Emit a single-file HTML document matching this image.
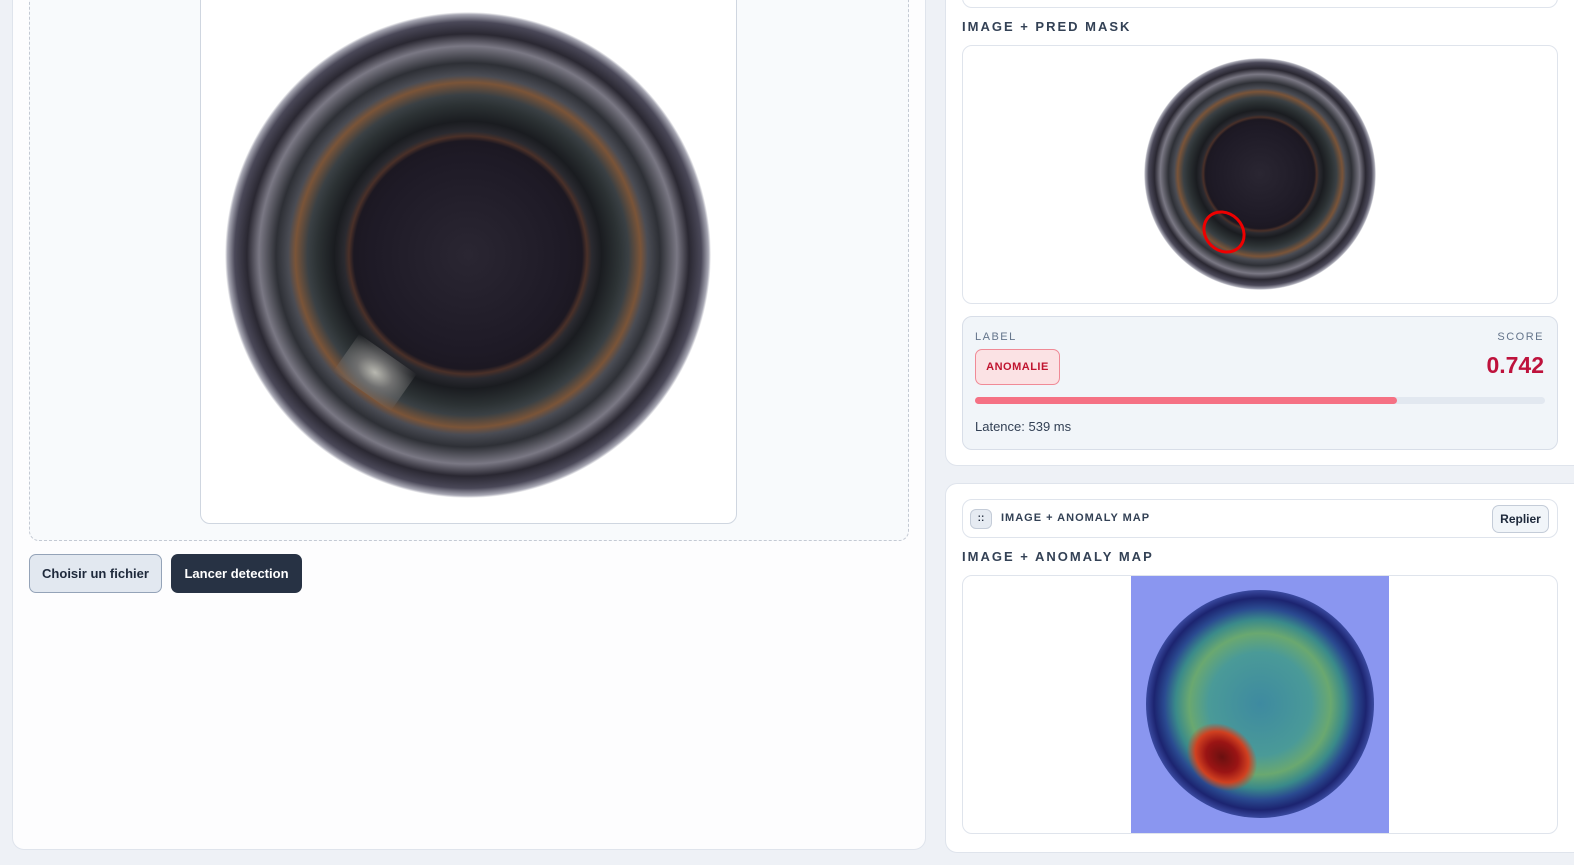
<!DOCTYPE html>
<html style="overflow:hidden;width:1574px;height:865px"><head><style>
*{box-sizing:border-box;margin:0;padding:0}
body{width:1574px;height:865px;background:#eef1f6;font-family:"Liberation Sans",sans-serif;position:relative;overflow:hidden;color:#1e293b}
.a{position:absolute}
.card{background:#fff;border:1px solid #dfe4ec;border-radius:12px}
.h{font-weight:bold;letter-spacing:2px;font-size:13px;color:#334155}
.btn{border-radius:7px;font-weight:bold;font-size:13px;display:flex;align-items:center;justify-content:center}
.bot{border-radius:50%;background:radial-gradient(circle closest-side,#2a2632 0,#1e1a26 40%,#1c1822 47%,#4a3028 49%,#2a2a30 51%,#1a1c20 55%,#2c3234 62%,#3a4044 66%,#7a5438 71%,#4a4c54 74%,#2e3036 79%,#7a7884 86%,#2a2832 91%,#4a4858 96%,#a8a8b4 99%,rgba(255,255,255,0) 100%)}
</style></head><body>
<div class="a card" style="left:12px;top:-20px;width:914px;height:870px;background:#fdfdfe"></div>
<div class="a" style="left:29px;top:-10px;width:880px;height:551px;border:1px dashed #c4cad4;border-radius:10px;background:#f8fafc"></div>
<div class="a" style="left:200px;top:-10px;width:537px;height:534px;background:#fff;border:1px solid #cfd6e0;border-radius:10px"></div>
<div class="a bot" style="left:225px;top:12px;width:486px;height:486px"></div>
<div class="a" style="left:340px;top:350px;width:70px;height:45px;background:radial-gradient(ellipse,#b8b8b0 0,#707070 40%,rgba(60,60,70,0) 100%);transform:rotate(35deg)"></div>
<div class="a btn" style="left:29px;top:554px;width:133px;height:39px;background:#e2e8f0;border:1px solid #94a3b8;color:#1e293b">Choisir un fichier</div>
<div class="a btn" style="left:171px;top:554px;width:131px;height:39px;background:#273244;color:#fff">Lancer detection</div>

<div class="a card" style="left:945px;top:-20px;width:629px;height:486px;border-right:none;border-radius:12px 0 0 12px"></div>
<div class="a" style="left:962px;top:-20px;width:596px;height:28px;border:1px solid #dfe4ec;border-radius:10px"></div>
<div class="a h" style="left:962px;top:19px">IMAGE + PRED MASK</div>
<div class="a" style="left:962px;top:45px;width:596px;height:259px;border:1px solid #dfe4ec;border-radius:10px;background:#fff"></div>
<div class="a bot" style="left:1144px;top:58px;width:232px;height:232px"></div>
<div class="a" style="left:1201px;top:212px;width:46px;height:40px;border:3px solid #e00;border-radius:50%;transform:rotate(45deg)"></div>
<div class="a" style="left:962px;top:316px;width:596px;height:134px;border:1px solid #d8dee8;border-radius:10px;background:#f1f5f9"></div>
<div class="a" style="left:975px;top:331px;font-size:11px;letter-spacing:1.5px;color:#64748b">LABEL</div>
<div class="a" style="left:1490px;top:331px;font-size:11px;letter-spacing:1.5px;color:#64748b;width:54px;text-align:right">SCORE</div>
<div class="a btn" style="left:975px;top:349px;width:85px;height:36px;background:#fbe2e4;border:1px solid #f08a96;color:#c0142f;font-size:11px;letter-spacing:.5px">ANOMALIE</div>
<div class="a" style="left:1440px;top:352px;width:104px;text-align:right;font-size:23px;font-weight:bold;color:#be123c">0.742</div>
<div class="a" style="left:975px;top:397px;width:570px;height:7px;border-radius:4px;background:#e2e8f0"></div>
<div class="a" style="left:975px;top:397px;width:422px;height:7px;border-radius:4px;background:#f57184"></div>
<div class="a" style="left:975px;top:419px;font-size:13px;color:#334155">Latence: 539 ms</div>

<div class="a card" style="left:945px;top:483px;width:629px;height:370px;border-right:none;border-radius:12px 0 0 12px"></div>
<div class="a" style="left:962px;top:499px;width:596px;height:39px;border:1px solid #dfe4ec;border-radius:10px"></div>
<div class="a" style="left:970px;top:509px;width:22px;height:20px;border:1px solid #c4ccd8;border-radius:6px;background:#e6ebf2;font-size:10px;text-align:center;line-height:18px;font-weight:bold">::</div>
<div class="a" style="left:1001px;top:512px;font-size:11px;font-weight:bold;letter-spacing:1px;color:#334155">IMAGE + ANOMALY MAP</div>
<div class="a btn" style="left:1492px;top:505px;width:57px;height:28px;border:1px solid #c4ccd8;background:#f1f5f9;font-size:12px;color:#1e293b">Replier</div>
<div class="a h" style="left:962px;top:549px">IMAGE + ANOMALY MAP</div>
<div class="a" style="left:962px;top:575px;width:596px;height:259px;border:1px solid #dfe4ec;border-radius:10px;background:#fff"></div>
<div class="a" style="left:1131px;top:576px;width:258px;height:257px;background:#8a96f0"></div>
<div class="a" style="left:1146px;top:590px;width:228px;height:228px;border-radius:50%;background:radial-gradient(circle closest-side,#3e8aa0 0,#4a9a98 45%,#6aa870 62%,#3a8a8a 74%,#2a4a90 84%,#1c2470 93%,#3a4aa0 100%)"></div>
<div class="a" style="left:1184px;top:726px;width:76px;height:62px;border-radius:50%;transform:rotate(40deg);background:radial-gradient(ellipse closest-side,#6a1010 0,#9a1414 45%,#d04020 75%,rgba(220,160,40,0) 100%)"></div>
</body></html>
